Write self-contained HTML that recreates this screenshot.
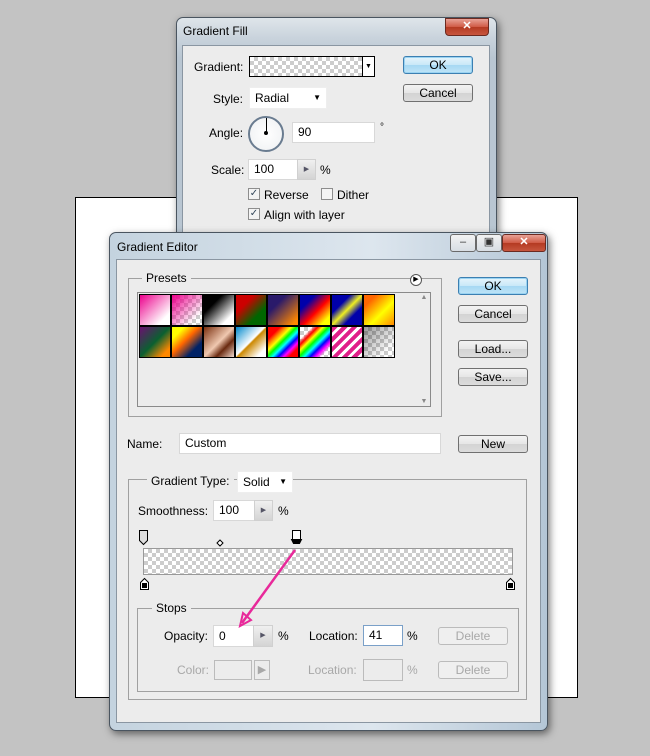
<!DOCTYPE html><html><head><style>
*{box-sizing:border-box;margin:0;padding:0}
body{width:650px;height:756px;background:#c3c3c3;position:relative;overflow:hidden;font-family:"Liberation Sans",sans-serif;font-size:12px;color:#000}
.a{position:absolute}
.win{position:absolute;border:1px solid #4a5560;border-radius:7px 7px 0 0;background:linear-gradient(#dfe5ea,#c9d3dc 20px,#b9c6d2 40px);box-shadow:2px 3px 8px rgba(0,0,0,.5)}
.panel{position:absolute;background:#ececec;border:1px solid #8a96a2}
.btn{position:absolute;border:1px solid #707070;border-radius:3px;background:linear-gradient(#f3f3f3,#e6e6e6 50%,#d3d3d3 51%,#dcdcdc);text-align:center;line-height:16px;font-size:12px}
.ok{border-color:#3c7fb1;background:linear-gradient(#e6f4fb,#c8e8f8 50%,#a6d8f3 51%,#bfe4f7);box-shadow:0 0 0 1px #9ad3f2 inset}
.inp{position:absolute;background:#fff;border:1px solid #d8d8d8;padding-left:5px;font-size:12px}
.grp{position:absolute;border:1px solid #a0a0a0}
.lbl{position:absolute;background:#ececec;padding:0 4px}
.chk{position:absolute;width:12px;height:12px;border:1px solid #8d8d8d;background:#f4f4f4;font-size:10px;line-height:10px;text-align:center;color:#33475a}
.spin{position:absolute;background:linear-gradient(#f0f0f0,#d4d4d4);border:1px solid #d0d0d0;font-size:7px;color:#556;text-align:center}
.checker{background-color:#fff;background-image:linear-gradient(45deg,#ccc 25%,transparent 25%,transparent 75%,#ccc 75%),linear-gradient(45deg,#ccc 25%,transparent 25%,transparent 75%,#ccc 75%);background-size:8px 8px;background-position:0 0,4px 4px}
.dis{color:#a8a8a8}
.sw{position:absolute;width:32px;height:32px;border:1px solid #000}
.cap{position:absolute;border:1px solid #6a6a6a;border-radius:3px;height:18px;background:linear-gradient(#f2f2f2,#d8dee4);text-align:center;font-size:11px;line-height:15px;color:#333}
.cls{background:linear-gradient(#e8a196,#cf5a44 50%,#b43a22 51%,#c7563e);color:#fff;font-weight:bold;border-color:#6b2a20}
</style></head><body>
<div class="a" style="left:75px;top:197px;width:503px;height:501px;background:#fff;border:1px solid #000"></div>

<!-- Gradient Fill -->
<div class="win" style="left:176px;top:17px;width:321px;height:230px">
 <div class="a" style="left:6px;top:6px;font-size:12px">Gradient Fill</div>
 <div class="cap cls" style="left:268px;top:0;width:44px;border-radius:0 0 4px 4px">✕</div>
 <div class="panel" style="left:5px;top:27px;width:308px;height:200px"></div>
</div>
<div class="a" style="left:194px;top:60px">Gradient:</div>
<div class="a checker" style="left:249px;top:56px;width:114px;height:21px;border:1px solid #000"></div>
<div class="a" style="left:363px;top:56px;width:12px;height:21px;border:1px solid #000;border-left:none;background:#fff;font-size:7px;text-align:center;line-height:19px">▼</div>
<div class="btn ok" style="left:403px;top:56px;width:70px;height:18px">OK</div>
<div class="btn" style="left:403px;top:84px;width:70px;height:18px">Cancel</div>
<div class="a" style="left:213px;top:92px">Style:</div>
<div class="inp" style="left:249px;top:87px;width:78px;height:22px;line-height:20px;border-color:#eee">Radial<span style="position:absolute;right:5px;font-size:8px">▼</span></div>
<div class="a" style="left:209px;top:126px">Angle:</div>
<div class="a" style="left:248px;top:116px;width:36px;height:36px;border-radius:50%;border:2px solid #6a7c90;background:radial-gradient(#fff,#eef0f2)"></div>
<div class="a" style="left:266px;top:118px;width:1px;height:15px;background:#000"></div>
<div class="a" style="left:264px;top:131px;width:4px;height:4px;background:#000;border-radius:2px"></div>
<div class="inp" style="left:292px;top:122px;width:83px;height:21px;line-height:19px">90</div>
<div class="a" style="left:380px;top:122px;font-size:10px">°</div>
<div class="a" style="left:211px;top:163px">Scale:</div>
<div class="inp" style="left:248px;top:159px;width:50px;height:21px;line-height:19px">100</div>
<div class="spin" style="left:297px;top:159px;width:19px;height:21px;line-height:19px">▶</div>
<div class="a" style="left:320px;top:163px">%</div>
<div class="chk" style="left:248px;top:188px">✓</div><div class="a" style="left:264px;top:188px">Reverse</div>
<div class="chk" style="left:321px;top:188px"></div><div class="a" style="left:337px;top:188px">Dither</div>
<div class="chk" style="left:248px;top:208px">✓</div><div class="a" style="left:264px;top:208px">Align with layer</div>

<!-- Gradient Editor -->
<div class="win" style="left:109px;top:232px;width:439px;height:499px;border-radius:7px;background:linear-gradient(90deg,#c4d3df,#dde6ee 60%,#b4c6d6)">
 <div class="a" style="left:7px;top:7px">Gradient Editor</div>
 <div class="cap" style="left:340px;top:1px;width:26px">–</div>
 <div class="cap" style="left:366px;top:1px;width:26px">▣</div>
 <div class="cap cls" style="left:392px;top:1px;width:44px">✕</div>
 <div class="panel" style="left:6px;top:26px;width:425px;height:464px"></div>
</div>
<div class="grp" style="left:128px;top:278px;width:314px;height:139px"></div>
<div class="lbl" style="left:142px;top:271px">Presets</div>
<div class="a" style="left:410px;top:274px;width:12px;height:12px;border:1px solid #555;border-radius:50%;background:#fff;font-size:7px;line-height:10px;text-align:center">▶</div>
<div class="a" style="left:137px;top:292px;width:294px;height:115px;border:1px solid #8a8a8a;background:#ececec"></div>
<div class="a" style="left:418px;top:294px;width:12px;height:111px;font-size:7px;color:#888;text-align:center">▲<div style="position:absolute;bottom:0;width:12px">▼</div></div>
<div class="sw" style="left:139px;top:294px;background:linear-gradient(135deg,#ec008c,#fff 80%)"></div>
<div class="sw checker" style="left:171px;top:294px"><div style="width:100%;height:100%;background:linear-gradient(135deg,#ec008c,transparent 80%)"></div></div>
<div class="sw" style="left:203px;top:294px;background:linear-gradient(135deg,#000 30%,#fff 80%)"></div>
<div class="sw" style="left:235px;top:294px;background:linear-gradient(135deg,#c00 30%,#060 70%)"></div>
<div class="sw" style="left:267px;top:294px;background:linear-gradient(135deg,#2a1a6a 30%,#f80 90%)"></div>
<div class="sw" style="left:299px;top:294px;background:linear-gradient(135deg,#00a 25%,#f00 55%,#ff0 85%)"></div>
<div class="sw" style="left:331px;top:294px;background:linear-gradient(135deg,#00a 30%,#ee2 50%,#00a 70%)"></div>
<div class="sw" style="left:363px;top:294px;background:linear-gradient(135deg,#f60 20%,#ff0 60%,#f80)"></div>
<div class="sw" style="left:139px;top:326px;background:linear-gradient(135deg,#6a1070,#0a6030 50%,#f80 85%)"></div>
<div class="sw" style="left:171px;top:326px;background:linear-gradient(135deg,#ff0 20%,#f60 45%,#026 75%)"></div>
<div class="sw" style="left:203px;top:326px;background:linear-gradient(135deg,#7a3010,#f0c8b0 50%,#6a2a10 70%,#f3dccf)"></div>
<div class="sw" style="left:235px;top:326px;background:linear-gradient(135deg,#08c,#fff 48%,#c80 52%,#fff 85%)"></div>
<div class="sw" style="left:267px;top:326px;background:linear-gradient(135deg,#f00 20%,#f80,#ff0,#0f0,#0ff,#00f,#f0f,#f00 85%)"></div>
<div class="sw checker" style="left:299px;top:326px"><div style="width:100%;height:100%;background:linear-gradient(135deg,transparent 20%,#f00,#ff0,#0f0,#0ff,#00f,#f0f,transparent 85%)"></div></div>
<div class="sw" style="left:331px;top:326px;background:repeating-linear-gradient(135deg,#e0208a 0 4px,#fff 4px 7px)"></div>
<div class="sw checker" style="left:363px;top:326px"><div style="width:100%;height:100%;background:linear-gradient(135deg,rgba(0,0,0,.4),transparent 80%)"></div></div>
<div class="btn ok" style="left:458px;top:277px;width:70px;height:18px">OK</div>
<div class="btn" style="left:458px;top:305px;width:70px;height:18px">Cancel</div>
<div class="btn" style="left:458px;top:340px;width:70px;height:18px">Load...</div>
<div class="btn" style="left:458px;top:368px;width:70px;height:18px">Save...</div>
<div class="a" style="left:127px;top:437px">Name:</div>
<div class="inp" style="left:179px;top:433px;width:262px;height:21px;line-height:19px">Custom</div>
<div class="btn" style="left:458px;top:435px;width:70px;height:18px">New</div>

<div class="grp" style="left:128px;top:479px;width:399px;height:221px"></div>
<div class="lbl" style="left:147px;top:474px">Gradient Type:</div>
<div class="inp" style="left:237px;top:471px;width:56px;height:22px;line-height:20px;border-color:#eee">Solid<span style="position:absolute;right:5px;font-size:8px">▼</span></div>
<div class="a" style="left:138px;top:504px">Smoothness:</div>
<div class="inp" style="left:213px;top:500px;width:42px;height:21px;line-height:19px">100</div>
<div class="spin" style="left:254px;top:500px;width:19px;height:21px;line-height:19px">▶</div>
<div class="a" style="left:278px;top:504px">%</div>
<svg class="a" style="left:135px;top:528px" width="390" height="70">
 <path d="M4.5 2.5h8v10l-4 4-4-4z" fill="#ddd" stroke="#000"/>
 <path d="M157.5 2.5h8v9h-8z" fill="#fff" stroke="#000"/><path d="M156.5 11.5h10l-2 4h-6z" fill="#000" stroke="#000"/>
 <path d="M85 12l3 3-3 3-3-3z" fill="#fff" stroke="#000"/>
 <path d="M5.5 61.5v-7l4-4 4 4v7z" fill="#fff" stroke="#000"/><rect x="7" y="55" width="5" height="5" fill="#000"/>
 <path d="M371.5 61.5v-7l4-4 4 4v7z" fill="#fff" stroke="#000"/><rect x="373" y="55" width="5" height="5" fill="#000"/>
</svg>
<div class="a checker" style="left:143px;top:548px;width:370px;height:27px;border:1px solid #999"></div>
<div class="grp" style="left:137px;top:608px;width:382px;height:84px"></div>
<div class="lbl" style="left:152px;top:601px">Stops</div>
<div class="a" style="left:164px;top:629px">Opacity:</div>
<div class="inp" style="left:213px;top:625px;width:41px;height:22px;line-height:20px">0</div>
<div class="spin" style="left:253px;top:625px;width:20px;height:22px;line-height:20px">▶</div>
<div class="a" style="left:278px;top:629px">%</div>
<div class="a" style="left:309px;top:629px">Location:</div>
<div class="inp" style="left:363px;top:625px;width:40px;height:21px;line-height:19px;border-color:#7aa0c8">41</div>
<div class="a" style="left:407px;top:629px">%</div>
<div class="btn dis" style="left:438px;top:627px;width:70px;height:18px;border-color:#bbb;background:#efefef">Delete</div>
<div class="a dis" style="left:177px;top:663px">Color:</div>
<div class="a" style="left:214px;top:660px;width:38px;height:20px;border:1px solid #bbb"></div>
<div class="a dis" style="left:254px;top:660px;width:16px;height:20px;border:1px solid #bbb;font-size:11px;line-height:18px;text-align:center">▶</div>
<div class="a dis" style="left:308px;top:663px">Location:</div>
<div class="a" style="left:363px;top:659px;width:40px;height:22px;border:1px solid #bbb"></div>
<div class="a dis" style="left:407px;top:663px">%</div>
<div class="btn dis" style="left:438px;top:661px;width:70px;height:18px;border-color:#bbb;background:#efefef">Delete</div>
<svg class="a" style="left:0;top:0" width="650" height="756"><path d="M295 550L242 623" stroke="#e8299a" stroke-width="2.5"/><path d="M240 626l3-13 8 7z" fill="none" stroke="#e8299a" stroke-width="2"/></svg>
</body></html>
